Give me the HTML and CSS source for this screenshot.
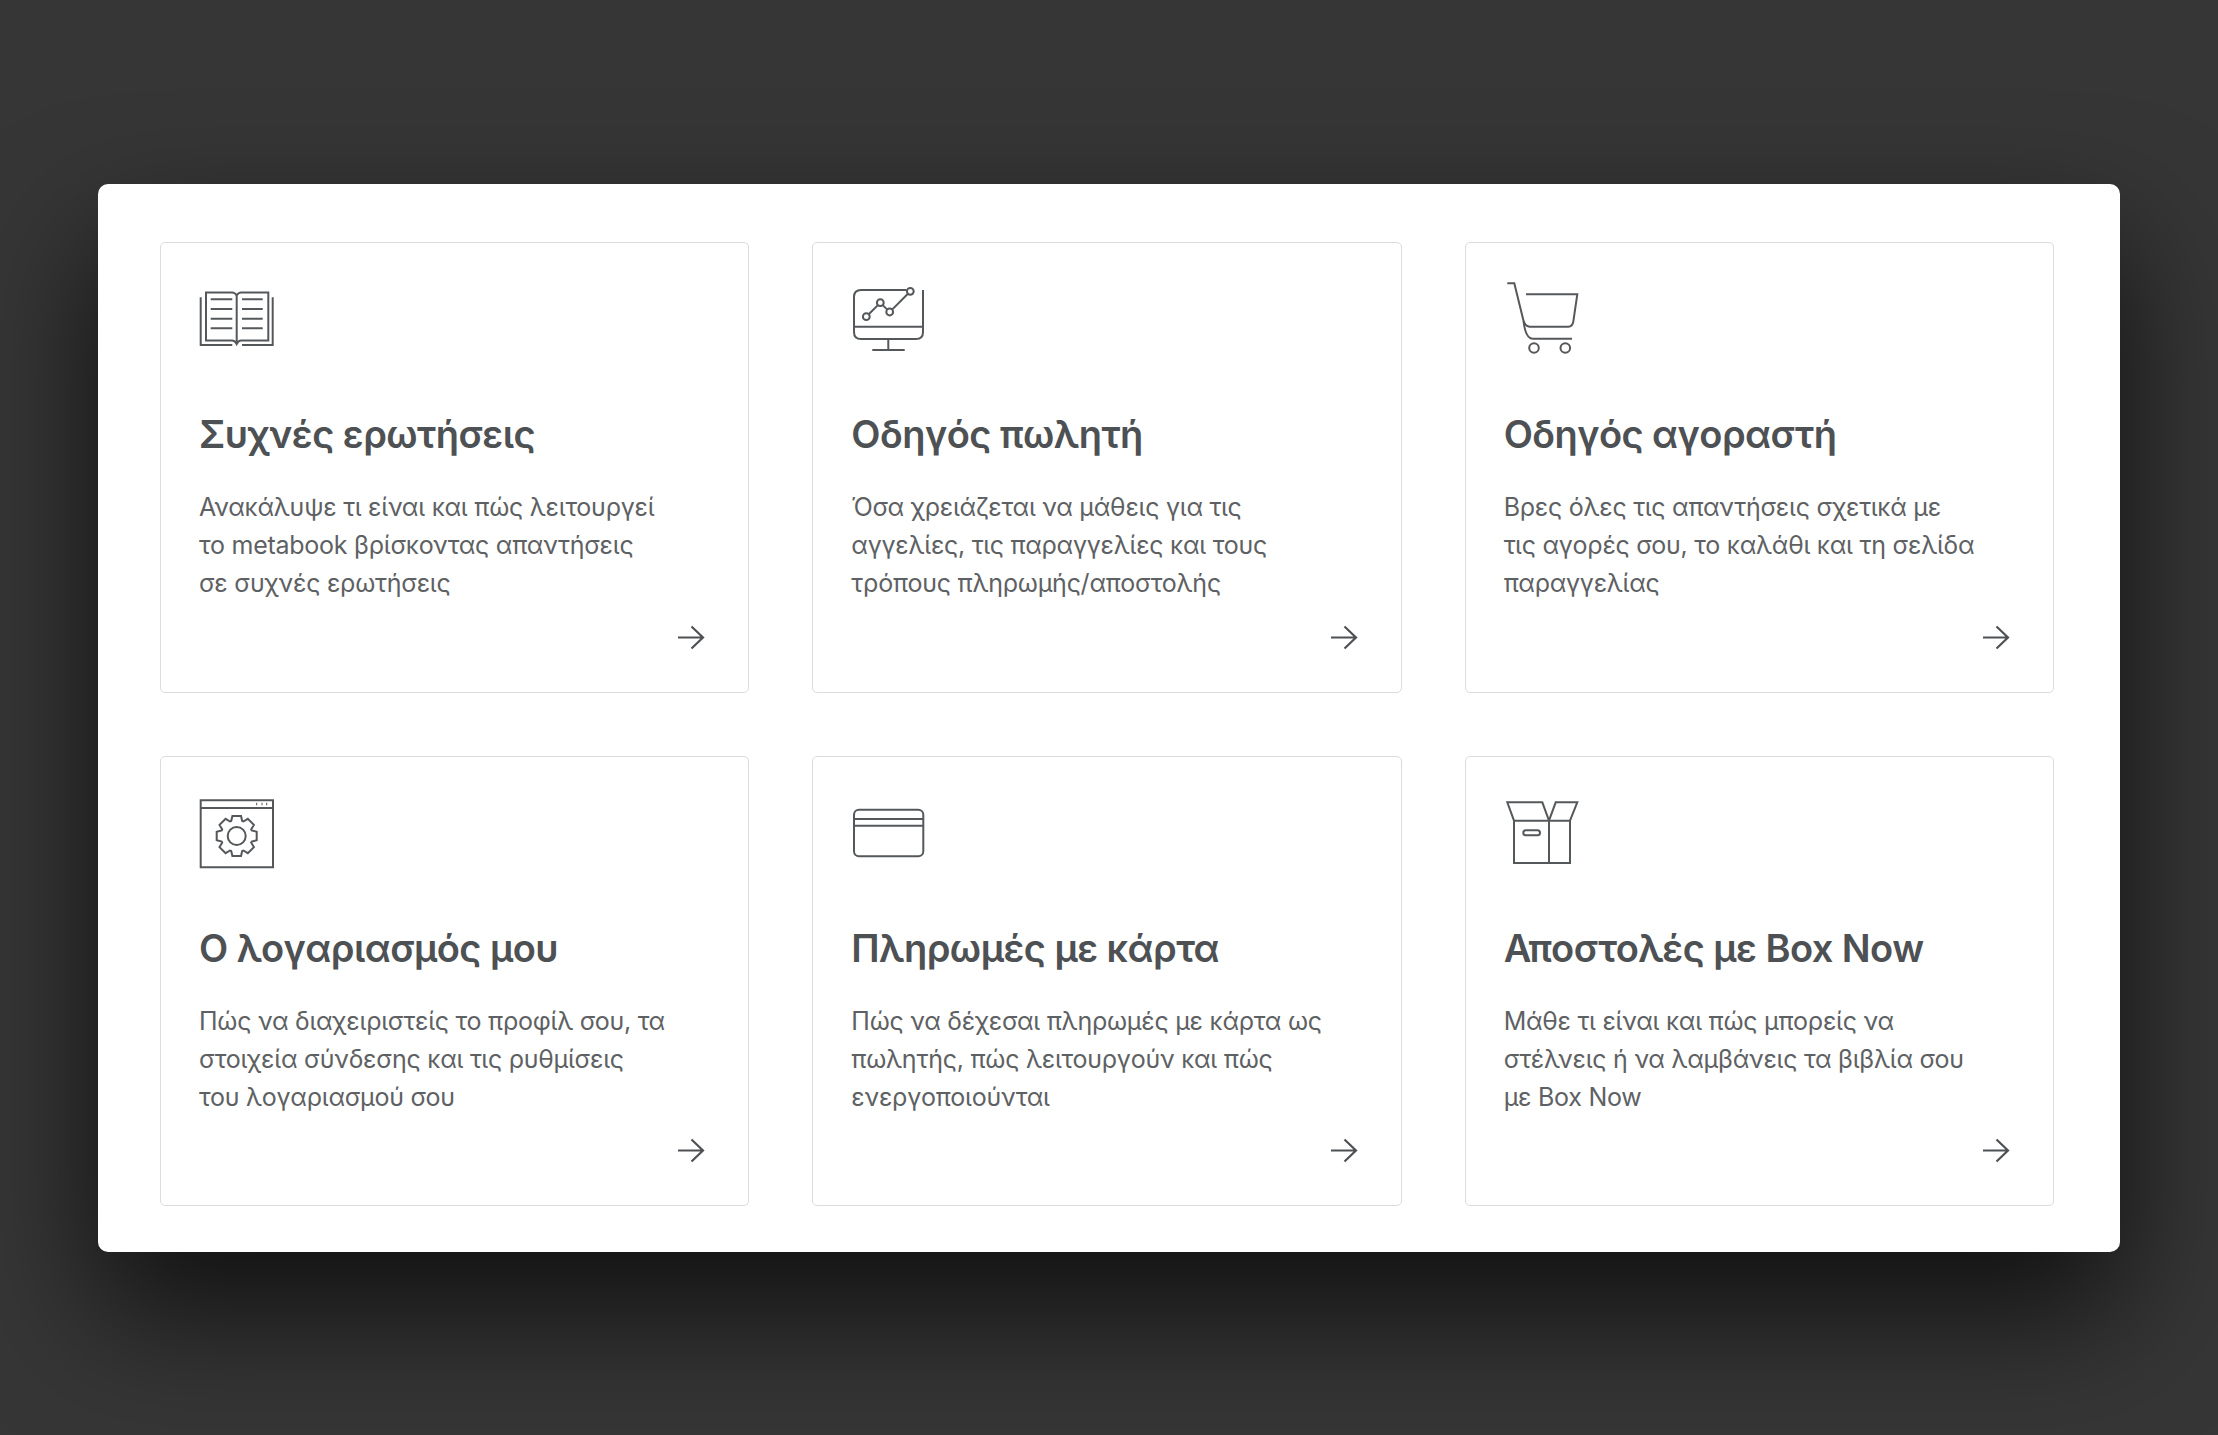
FILE: index.html
```html
<!DOCTYPE html>
<html lang="el">
<head>
    <meta charset="UTF-8">
    <meta name="viewport" content="width=device-width, initial-scale=1.0">
    <title>Βοήθεια</title>
    <link rel="stylesheet" href="styles.css">
</head>
<body>
    <div class="panel">
        <div class="card">
            <svg class="icon" viewBox="0 0 80 80">
                <path d="M38.7 15.5Q37 12.5 34 12.5H8V60.5H34Q37 60.5 38.7 64Q40.4 60.5 43 60.5H70.3V12.5H43Q40.4 12.5 38.7 15.5V64"/>
                <path d="M2.7 17.3V65H34.3M44 65H74.7V17.3"/>
                <path d="M12.7 19.3H34.3M12.7 29H34.3M12.7 38.7H34.3M12.7 48.3H34.3M44 19.3H64.7M44 29H64.7M44 38.7H64.7M44 48.3H64.7"/>
            </svg>
            <h2>Συχνές ερωτήσεις</h2>
            <p>Ανακάλυψε τι είναι και πώς λειτουργεί<br>το metabook βρίσκοντας απαντήσεις<br>σε συχνές ερωτήσεις</p>
            <svg class="arrow" viewBox="0 0 26 24"><path d="M0 11.5H25M13.5 0.5L25 11.5L13.5 22.5"/></svg>
        </div>
        <div class="card">
            <svg class="icon" viewBox="0 0 80 80">
                <path d="M73 10V52Q73 59 66 59H11Q4 59 4 52V17Q4 10 11 10H56.5M4 46.7H73M38.3 59V70M22.3 70H54.7"/>
                <circle cx="16.3" cy="36.7" r="3.4"/>
                <circle cx="30.3" cy="22.7" r="3.4"/>
                <circle cx="39.7" cy="32" r="3.4"/>
                <circle cx="60.3" cy="11.3" r="3.4"/>
                <path d="M18.7 34.3L27.9 25.1M32.7 25.1L37.3 29.6M42.1 29.6L57.9 13.7"/>
            </svg>
            <h2>Οδηγός πωλητή</h2>
            <p>Όσα χρειάζεται να μάθεις για τις<br>αγγελίες, τις παραγγελίες και τους<br>τρόπους πληρωμής/αποστολής</p>
            <svg class="arrow" viewBox="0 0 26 24"><path d="M0 11.5H25M13.5 0.5L25 11.5L13.5 22.5"/></svg>
        </div>
        <div class="card">
            <svg class="icon" viewBox="0 0 80 80">
                <path d="M4.3 3.3H11.3L20.3 40Q22 46.7 27 46.7H65.3Q69.5 46.7 70.3 41.7L74.3 14.3H23"/>
                <path d="M20.5 41Q22.5 58.7 30 58.7H69"/>
                <circle cx="31" cy="68" r="4.8"/>
                <circle cx="62.3" cy="68" r="4.8"/>
            </svg>
            <h2>Οδηγός αγοραστή</h2>
            <p>Βρες όλες τις απαντήσεις σχετικά με<br>τις αγορές σου, το καλάθι και τη σελίδα<br>παραγγελίας</p>
            <svg class="arrow" viewBox="0 0 26 24"><path d="M0 11.5H25M13.5 0.5L25 11.5L13.5 22.5"/></svg>
        </div>
        <div class="card">
            <svg class="icon" viewBox="0 0 80 80">
                <path d="M2.7 6.3H75V73.3H2.7ZM2.7 14H75"/>
                <path class="dots" d="M58.2 10H59.2M63.5 10H64.5M68.2 10H69.2"/>
                <circle cx="38.7" cy="42" r="9"/>
                <polygon transform="translate(38.7 42)" points="-5.5,-15 -4.3,-20 4.3,-20 5.5,-15 6.7,-14.5 11.1,-17.2 17.2,-11.1 14.5,-6.7 15,-5.5 20,-4.3 20,4.3 15,5.5 14.5,6.7 17.2,11.1 11.1,17.2 6.7,14.5 5.5,15 4.3,20 -4.3,20 -5.5,15 -6.7,14.5 -11.1,17.2 -17.2,11.1 -14.5,6.7 -15,5.5 -20,4.3 -20,-4.3 -15,-5.5 -14.5,-6.7 -17.2,-11.1 -11.1,-17.2 -6.7,-14.5"/>
            </svg>
            <h2>Ο λογαριασμός μου</h2>
            <p>Πώς να διαχειριστείς το προφίλ σου, τα<br>στοιχεία σύνδεσης και τις ρυθμίσεις<br>του λογαριασμού σου</p>
            <svg class="arrow" viewBox="0 0 26 24"><path d="M0 11.5H25M13.5 0.5L25 11.5L13.5 22.5"/></svg>
        </div>
        <div class="card">
            <svg class="icon" viewBox="0 0 80 80">
                <rect x="4" y="15.7" width="69.3" height="46.6" rx="5"/>
                <path d="M4 25H73.3M4 31.7H73.3"/>
            </svg>
            <h2>Πληρωμές με κάρτα</h2>
            <p>Πώς να δέχεσαι πληρωμές με κάρτα ως<br>πωλητής, πώς λειτουργούν και πώς<br>ενεργοποιούνται</p>
            <svg class="arrow" viewBox="0 0 26 24"><path d="M0 11.5H25M13.5 0.5L25 11.5L13.5 22.5"/></svg>
        </div>
        <div class="card">
            <svg class="icon" viewBox="0 0 80 80">
                <path d="M11 26.7H67V69H11ZM46 26.7V69"/>
                <path d="M11 26.7L4.3 8.3H39.3L46 26.7L52.7 8.3H74.3L67 26.7"/>
                <rect x="20.3" y="36.3" width="16.7" height="5" rx="2.5"/>
            </svg>
            <h2>Αποστολές με Box Now</h2>
            <p>Μάθε τι είναι και πώς μπορείς να<br>στέλνεις ή να λαμβάνεις τα βιβλία σου<br>με Box Now</p>
            <svg class="arrow" viewBox="0 0 26 24"><path d="M0 11.5H25M13.5 0.5L25 11.5L13.5 22.5"/></svg>
        </div>
    </div>
</body>
</html>
```

FILE: styles.css
```css
html {
    height: 100%;
}

body {
    margin: 0;
    height: 100%;
    box-sizing: border-box;
    padding: 184px 98px 0;
    background-color: #363636;
    font-family: Inter, "Noto Sans", sans-serif;
    overflow: hidden;
}

.panel {
    width: 2022px;
    height: 1068px;
    box-sizing: border-box;
    padding: 58px 66px 46px 62px;
    display: grid;
    grid-template-columns: repeat(3, 1fr);
    grid-template-rows: repeat(2, 1fr);
    gap: 63px;
    background-color: white;
    border-radius: 10px;
    box-shadow: 0 60px 130px rgba(0, 0, 0, 0.7);
}

.card {
    display: flex;
    flex-direction: column;
    box-sizing: border-box;
    padding: 37px 38px 42px 37px;
    border: 1px solid #dcdcdc;
    border-radius: 5px;
    color: #55585a;
}

.icon {
    width: 80px;
    height: 80px;
    flex: none;
}

.icon path,
.icon circle,
.icon rect,
.icon polygon {
    fill: none;
    stroke: #55585b;
    stroke-width: 2;
}

.icon .dots {
    stroke-width: 2.4;
}

h2 {
    margin: 50px 0 0 1px;
    font-size: 38px;
    line-height: 48px;
    font-weight: 600;
    letter-spacing: -0.55px;
    color: #4e5154;
}

p {
    margin: 30px 0 0 1px;
    font-size: 25px;
    line-height: 38px;
    font-weight: 400;
    letter-spacing: -0.25px;
    color: #5e6163;
}

.arrow {
    width: 26px;
    height: 24px;
    margin: auto 6px 0 auto;
    overflow: visible;
}

.arrow path {
    fill: none;
    stroke: #4e5154;
    stroke-width: 2.2;
}
```
